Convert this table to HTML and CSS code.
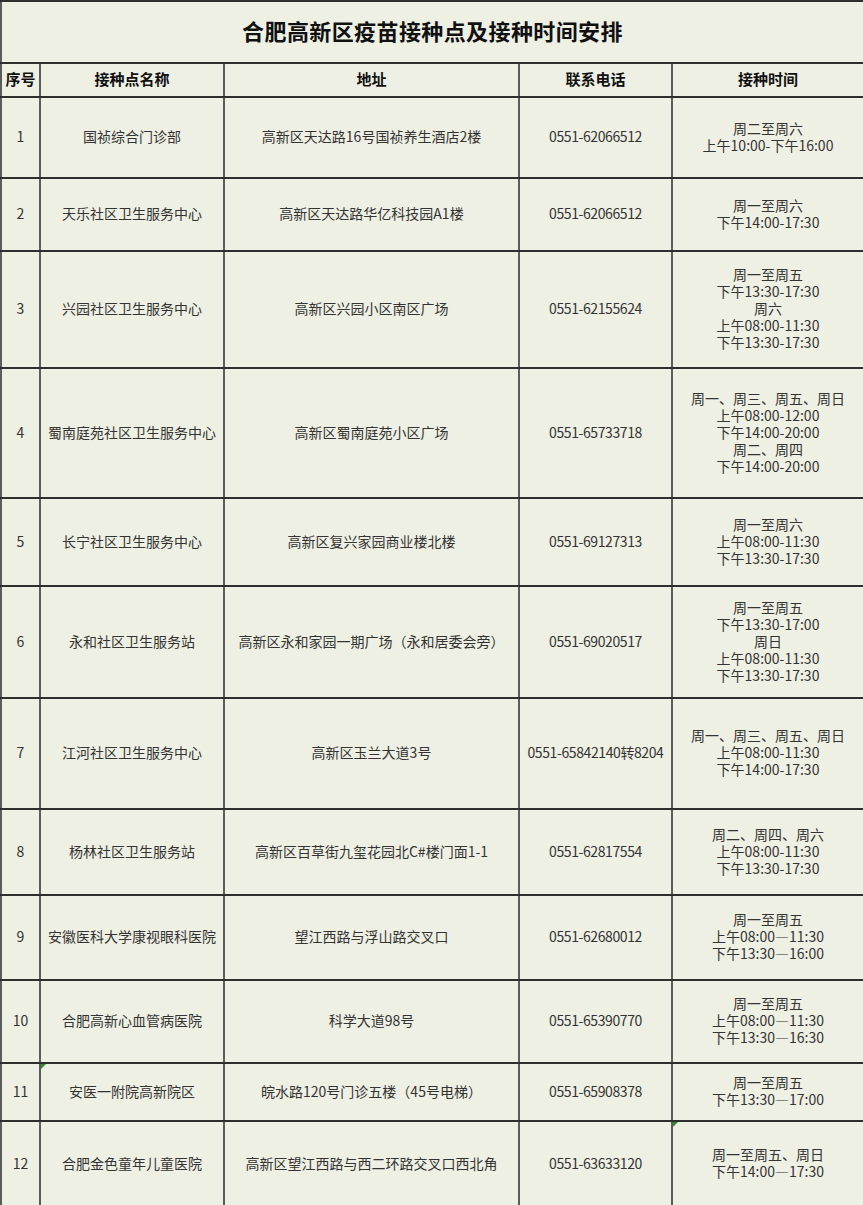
FILE: index.html
```html
<!DOCTYPE html>
<html lang="zh-CN">
<head>
<meta charset="utf-8">
<title>合肥高新区疫苗接种点及接种时间安排</title>
<link rel="stylesheet" href="styles.css">
</head>
<body>
<table class="sheet">
  <colgroup>
    <col class="c-no"><col class="c-name"><col class="c-addr"><col class="c-tel"><col class="c-time">
  </colgroup>
  <tr class="r-title"><th colspan="5" class="title">合肥高新区疫苗接种点及接种时间安排</th></tr>
  <tr class="r-head">
    <th>序号</th><th>接种点名称</th><th>地址</th><th>联系电话</th><th>接种时间</th>
  </tr>
  <tr class="r1"><td>1</td><td>国祯综合门诊部</td><td>高新区天达路16号国祯养生酒店2楼</td><td class="tel">0551-62066512</td><td>周二至周六<br>上午10:00-下午16:00</td></tr>
  <tr class="r2"><td>2</td><td>天乐社区卫生服务中心</td><td>高新区天达路华亿科技园A1楼</td><td class="tel">0551-62066512</td><td>周一至周六<br>下午14:00-17:30</td></tr>
  <tr class="r3"><td>3</td><td>兴园社区卫生服务中心</td><td>高新区兴园小区南区广场</td><td class="tel">0551-62155624</td><td>周一至周五<br>下午13:30-17:30<br>周六<br>上午08:00-11:30<br>下午13:30-17:30</td></tr>
  <tr class="r4"><td>4</td><td>蜀南庭苑社区卫生服务中心</td><td>高新区蜀南庭苑小区广场</td><td class="tel">0551-65733718</td><td>周一、周三、周五、周日<br>上午08:00-12:00<br>下午14:00-20:00<br>周二、周四<br>下午14:00-20:00</td></tr>
  <tr class="r5"><td>5</td><td>长宁社区卫生服务中心</td><td>高新区复兴家园商业楼北楼</td><td class="tel">0551-69127313</td><td>周一至周六<br>上午08:00-11:30<br>下午13:30-17:30</td></tr>
  <tr class="r6"><td>6</td><td>永和社区卫生服务站</td><td>高新区永和家园一期广场（永和居委会旁）</td><td class="tel">0551-69020517</td><td>周一至周五<br>下午13:30-17:00<br>周日<br>上午08:00-11:30<br>下午13:30-17:30</td></tr>
  <tr class="r7"><td>7</td><td>江河社区卫生服务中心</td><td>高新区玉兰大道3号</td><td class="tel">0551-65842140转8204</td><td>周一、周三、周五、周日<br>上午08:00-11:30<br>下午14:00-17:30</td></tr>
  <tr class="r8"><td>8</td><td>杨林社区卫生服务站</td><td>高新区百草街九玺花园北C#楼门面1-1</td><td class="tel">0551-62817554</td><td>周二、周四、周六<br>上午08:00-11:30<br>下午13:30-17:30</td></tr>
  <tr class="r9"><td>9</td><td>安徽医科大学康视眼科医院</td><td>望江西路与浮山路交叉口</td><td class="tel">0551-62680012</td><td>周一至周五<br>上午08:00—11:30<br>下午13:30—16:00</td></tr>
  <tr class="r10"><td>10</td><td>合肥高新心血管病医院</td><td>科学大道98号</td><td class="tel">0551-65390770</td><td>周一至周五<br>上午08:00—11:30<br>下午13:30—16:30</td></tr>
  <tr class="r11"><td>11</td><td class="flag">安医一附院高新院区</td><td>皖水路120号门诊五楼（45号电梯）</td><td class="tel">0551-65908378</td><td>周一至周五<br>下午13:30—17:00</td></tr>
  <tr class="r12"><td>12</td><td>合肥金色童年儿童医院</td><td>高新区望江西路与西二环路交叉口西北角</td><td class="tel">0551-63633120</td><td class="flag">周一至周五、周日<br>下午14:00—17:30</td></tr>
</table>
</body>
</html>
```
FILE: styles.css
```css
html, body {
  margin: 0;
  padding: 0;
  background: #eef0e3;
}
.sheet {
  width: 863px;
  table-layout: fixed;
  border-collapse: collapse;
  background: #eef0e3;
  font-family: "Noto Sans CJK SC", "Liberation Sans", sans-serif;
  color: #333333;
}
.c-no { width: 39px; }
.c-name { width: 184px; }
.c-addr { width: 295px; }
.c-tel { width: 153px; }
.c-time { width: 192px; }
.sheet th, .sheet td {
  border-top: 2px solid #2f2f2f;
  border-bottom: 2px solid #2f2f2f;
  border-left: 2px solid #5c5c5c;
  border-right: 2px solid #5c5c5c;
  padding: 0;
  text-align: center;
  vertical-align: middle;
  font-size: 14px;
  line-height: 17px;
  font-weight: normal;
  white-space: nowrap;
  position: relative;
}
.sheet th {
  font-weight: bold;
  color: #111;
  font-size: 15px;
  padding-bottom: 4px;
}
.sheet .title {
  font-size: 22px;
  letter-spacing: 0.4px;
  padding-bottom: 4px;
}
.sheet td {
  padding-bottom: 2px;
}
.tel { letter-spacing: -0.4px; }
.flag::before {
  content: "";
  position: absolute;
  left: 0;
  top: 0;
  border-top: 5px solid #2e8b2e;
  border-right: 5px solid transparent;
}
.r-title { height: 62px; }
.r-head { height: 34px; }
.r1 { height: 81px; }
.r2 { height: 73px; }
.r3 { height: 117px; }
.r4 { height: 130px; }
.r5 { height: 88px; }
.r6 { height: 112px; }
.r7 { height: 111px; }
.r8 { height: 86px; }
.r9 { height: 85px; }
.r10 { height: 83px; }
.r11 { height: 58px; }
.r12 { height: 86px; }
```
